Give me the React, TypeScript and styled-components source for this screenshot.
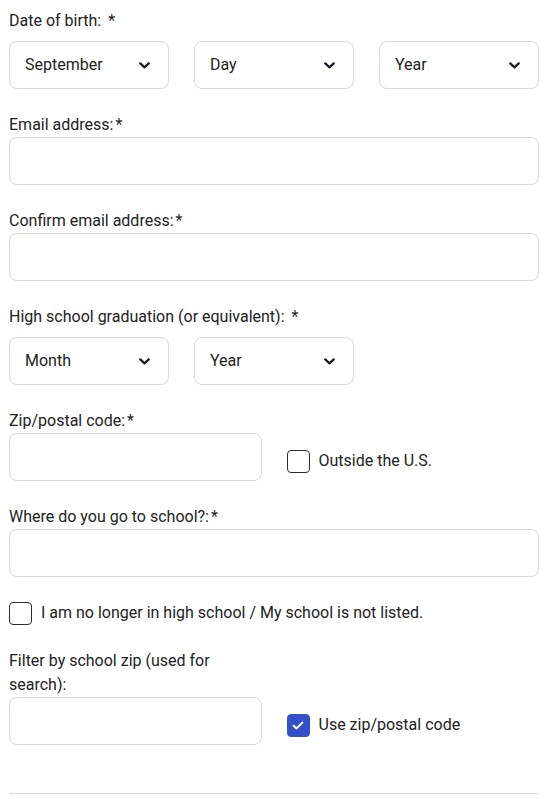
import { createGlobalStyle } from "styled-components";
import styled from "styled-components";

const GlobalStyle = createGlobalStyle`
  html, body {
    margin: 0;
    padding: 0;
    background: #ffffff;
  }
  body {
    font-family: Roboto, "Liberation Sans", Arial, sans-serif;
    font-size: 16px;
    line-height: 24px;
    color: #222222;
  }
  * {
    box-sizing: border-box;
  }
`;

const Page = styled.form`
  padding: 9px 7px 0 9px;
  display: flex;
  flex-direction: column;
  gap: 24px;
`;

const Fieldset = styled.fieldset`
  margin: 0;
  padding: 0;
  border: 0;
  min-width: 0;
`;

const Legend = styled.legend`
  padding: 0;
  margin-bottom: 8px;
  line-height: 24px;
`;

const Field = styled.div`
  display: flex;
  flex-direction: column;
`;

const Label = styled.label`
  display: block;
  line-height: 24px;
`;

const Star = styled.span<{ $wide?: boolean }>`
  margin-left: ${(p) => (p.$wide ? "7px" : "2px")};
`;

const ThreeCol = styled.div`
  display: grid;
  grid-template-columns: repeat(3, 1fr);
  column-gap: 25px;
`;

const TwoCol = styled.div`
  display: grid;
  grid-template-columns: repeat(2, 1fr);
  column-gap: 25px;
  align-items: end;
`;

const SelectBox = styled.div`
  height: 48px;
  border: 1px solid #d9d9d9;
  border-radius: 8px;
  padding: 0 18px 0 15px;
  display: flex;
  align-items: center;
  justify-content: space-between;
  background: #ffffff;
  cursor: pointer;
`;

const SelectText = styled.span`
  color: #222222;
`;

const TextInput = styled.input`
  display: block;
  width: 100%;
  height: 48px;
  border: 1px solid #d9d9d9;
  border-radius: 8px;
  padding: 0 15px;
  font: inherit;
  color: #222222;
  background: #ffffff;
  outline: none;
`;

const CheckRow = styled.label<{ $offset?: boolean }>`
  display: flex;
  align-items: center;
  gap: 9px;
  height: 24px;
  margin-bottom: ${(p) => (p.$offset ? "8px" : "0")};
  cursor: pointer;
`;

const Box = styled.span<{ $checked?: boolean }>`
  flex: none;
  width: 23px;
  height: 23px;
  border-radius: 4px;
  border: 1px solid ${(p) => (p.$checked ? "#3450c8" : "#2b2b2b")};
  background: ${(p) => (p.$checked ? "#3450c8" : "#ffffff")};
  display: flex;
  align-items: center;
  justify-content: center;
`;

const Divider = styled.hr`
  margin: 24px 0 0;
  border: 0;
  border-top: 1px solid #dcdcdc;
`;

const Chevron = () => (
  <svg width="11" height="7" viewBox="0 0 11 7" aria-hidden="true">
    <path
      d="M1.3 1.4 L5.5 5.3 L9.7 1.4"
      fill="none"
      stroke="#1c1c2a"
      strokeWidth="2.3"
      strokeLinecap="round"
      strokeLinejoin="round"
    />
  </svg>
);

const Tick = () => (
  <svg width="12" height="9" viewBox="0 0 12 9" aria-hidden="true">
    <path
      d="M1.6 4.7 L4.5 7.4 L10.4 1.6"
      fill="none"
      stroke="#ffffff"
      strokeWidth="2"
      strokeLinecap="round"
      strokeLinejoin="round"
    />
  </svg>
);

const Select = ({ value }: { value: string }) => (
  <SelectBox role="combobox">
    <SelectText>{value}</SelectText>
    <Chevron />
  </SelectBox>
);

const Checkbox = ({
  label,
  checked,
  offset,
}: {
  label: string;
  checked?: boolean;
  offset?: boolean;
}) => (
  <CheckRow $offset={offset}>
    <Box $checked={checked}>{checked && <Tick />}</Box>
    <span>{label}</span>
  </CheckRow>
);

export default function App() {
  return (
    <>
      <GlobalStyle />
      <Page>
        <Fieldset>
          <Legend>
            Date of birth:<Star $wide>*</Star>
          </Legend>
          <ThreeCol>
            <Select value="September" />
            <Select value="Day" />
            <Select value="Year" />
          </ThreeCol>
        </Fieldset>

        <Field>
          <Label>
            Email address:<Star>*</Star>
          </Label>
          <TextInput type="email" />
        </Field>

        <Field>
          <Label>
            Confirm email address:<Star>*</Star>
          </Label>
          <TextInput type="email" />
        </Field>

        <Fieldset>
          <Legend>
            High school graduation (or equivalent):<Star $wide>*</Star>
          </Legend>
          <ThreeCol>
            <Select value="Month" />
            <Select value="Year" />
          </ThreeCol>
        </Fieldset>

        <TwoCol>
          <Field>
            <Label>
              Zip/postal code:<Star>*</Star>
            </Label>
            <TextInput type="text" />
          </Field>
          <Checkbox label="Outside the U.S." offset />
        </TwoCol>

        <Field>
          <Label>
            Where do you go to school?:<Star>*</Star>
          </Label>
          <TextInput type="text" />
        </Field>

        <Checkbox label="I am no longer in high school / My school is not listed." />

        <TwoCol>
          <Field>
            <Label>Filter by school zip (used for search):</Label>
            <TextInput type="text" />
          </Field>
          <Checkbox label="Use zip/postal code" checked offset />
        </TwoCol>

        <Divider />
      </Page>
    </>
  );
}
